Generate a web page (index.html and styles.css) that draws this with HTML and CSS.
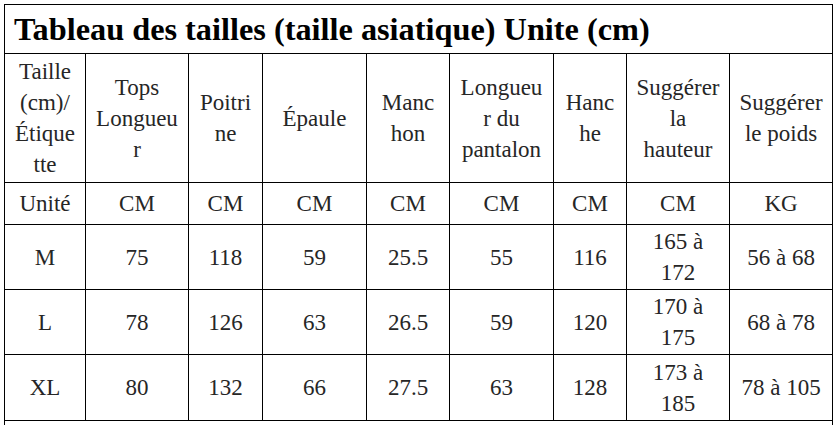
FILE: index.html
```html
<!DOCTYPE html>
<html lang="fr">
<head>
<meta charset="utf-8">
<title>Tableau des tailles</title>
<link rel="stylesheet" href="styles.css">
</head>
<body>
<table class="size-table">
  <colgroup>
    <col class="c1"><col class="c2"><col class="c3"><col class="c4"><col class="c5"><col class="c6"><col class="c7"><col class="c8"><col class="c9">
  </colgroup>
  <tr class="r-title">
    <td class="title" colspan="9">Tableau des tailles (taille asiatique) Unite (cm)</td>
  </tr>
  <tr class="r-head">
    <td class="cell">Taille<br>(cm)/<br>Étique<br>tte</td>
    <td class="cell">Tops<br>Longueu<br>r</td>
    <td class="cell">Poitri<br>ne</td>
    <td class="cell">Épaule</td>
    <td class="cell">Manc<br>hon</td>
    <td class="cell">Longueu<br>r du<br>pantalon</td>
    <td class="cell">Hanc<br>he</td>
    <td class="cell">Suggérer<br>la<br>hauteur</td>
    <td class="cell">Suggérer<br>le poids</td>
  </tr>
  <tr class="r-unit">
    <td class="cell">Unité</td><td class="cell">CM</td><td class="cell">CM</td><td class="cell">CM</td><td class="cell">CM</td><td class="cell">CM</td><td class="cell">CM</td><td class="cell">CM</td><td class="cell">KG</td>
  </tr>
  <tr class="r-data">
    <td class="cell">M</td><td class="cell">75</td><td class="cell">118</td><td class="cell">59</td><td class="cell">25.5</td><td class="cell">55</td><td class="cell">116</td><td class="cell">165 à<br>172</td><td class="cell">56 à 68</td>
  </tr>
  <tr class="r-data">
    <td class="cell">L</td><td class="cell">78</td><td class="cell">126</td><td class="cell">63</td><td class="cell">26.5</td><td class="cell">59</td><td class="cell">120</td><td class="cell">170 à<br>175</td><td class="cell">68 à 78</td>
  </tr>
  <tr class="r-data r-last">
    <td class="cell">XL</td><td class="cell">80</td><td class="cell">132</td><td class="cell">66</td><td class="cell">27.5</td><td class="cell">63</td><td class="cell">128</td><td class="cell">173 à<br>185</td><td class="cell">78 à 105</td>
  </tr>
  <tr class="r-note">
    <td class="note" colspan="9"></td>
  </tr>
</table>
</body>
</html>
```

FILE: styles.css
```css
html, body {
  margin: 0;
  padding: 0;
  background: #fff;
}

body {
  padding: 4px 0 0 4px;
  font-family: "Liberation Serif", serif;
  color: #262626;
}

.size-table {
  border-collapse: collapse;
  table-layout: fixed;
  width: 829px;
  font-family: "Liberation Serif", serif;
}

.cell,
.title,
.note {
  border: 1px solid #000;
  padding: 0;
  font-family: "Liberation Serif", serif;
}

.cell {
  text-align: center;
  vertical-align: middle;
  font-size: 23px;
  line-height: 31px;
}

.c1 { width: 81px; }
.c2 { width: 103px; }
.c3 { width: 74px; }
.c4 { width: 104px; }
.c5 { width: 83px; }
.c6 { width: 104px; }
.c7 { width: 73px; }
.c8 { width: 103px; }
.c9 { width: 103px; }

.title {
  text-align: left;
  vertical-align: middle;
  padding-left: 9px;
  font-size: 32.3px;
  font-weight: bold;
  line-height: 40px;
  color: #000;
}

.r-title { height: 49px; }
.r-head { height: 129px; }
.r-unit { height: 42px; }
.r-data { height: 65px; }
.r-last { height: 66px; }
.r-note { height: 40px; }
```
